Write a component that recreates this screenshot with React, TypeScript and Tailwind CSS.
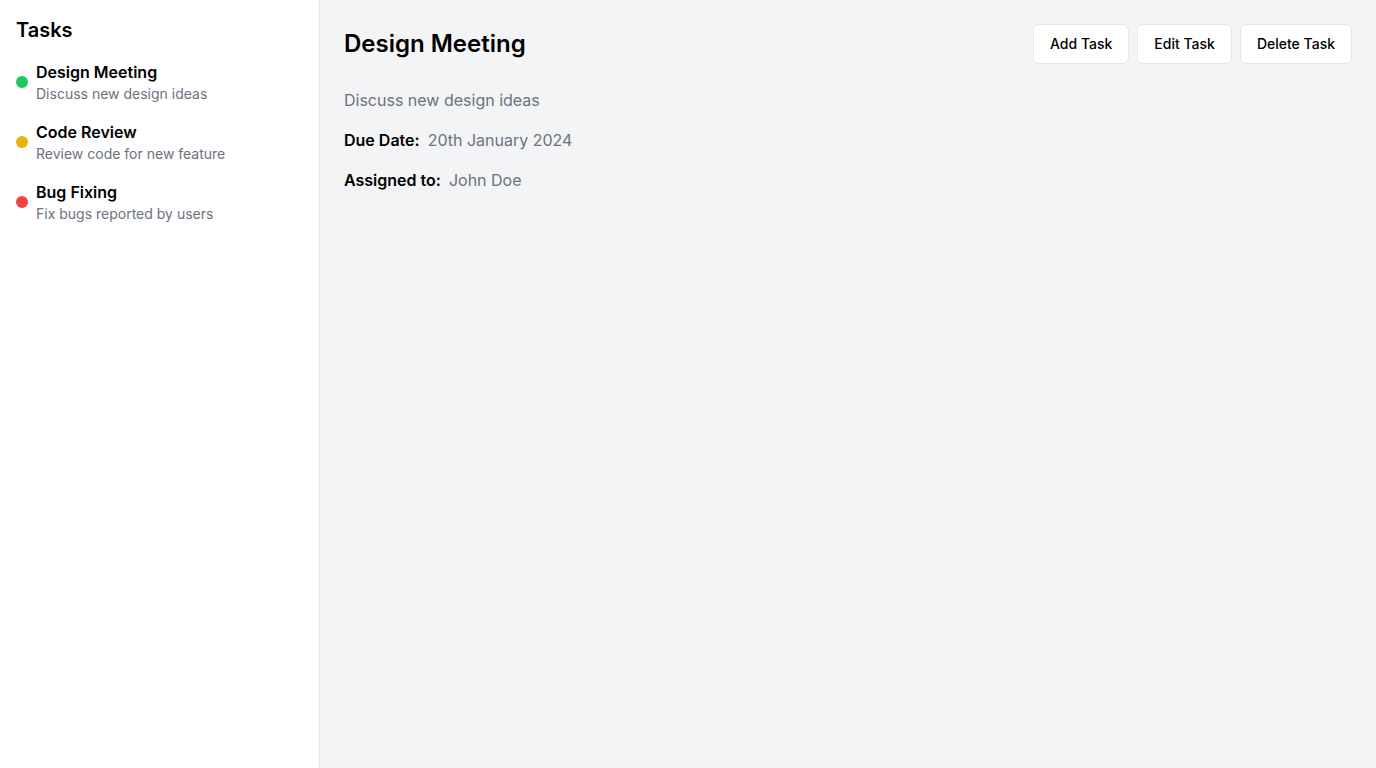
const tasks = [
  { title: "Design Meeting", desc: "Discuss new design ideas", dot: "bg-[#22c55e]" },
  { title: "Code Review", desc: "Review code for new feature", dot: "bg-[#eab308]" },
  { title: "Bug Fixing", desc: "Fix bugs reported by users", dot: "bg-[#ef4444]" },
];

export default function App() {
  return (
    <div className="flex h-screen w-full font-['Inter',sans-serif] text-black">
      <aside className="w-80 shrink-0 border-r border-[#e5e7eb] bg-white p-4">
        <h2 className="mb-4 text-xl font-semibold">Tasks</h2>
        <ul className="space-y-4">
          {tasks.map((t) => (
            <li key={t.title} className="flex items-center gap-2">
              <span className={`h-3 w-3 rounded-full ${t.dot}`} />
              <div>
                <p className="font-semibold">{t.title}</p>
                <p className="text-sm text-[#6b7280]">{t.desc}</p>
              </div>
            </li>
          ))}
        </ul>
      </aside>

      <main className="flex-1 bg-[#f3f4f6] p-6">
        <div className="flex items-center justify-between">
          <h1 className="text-2xl font-semibold">Design Meeting</h1>
          <div className="flex gap-2">
            <button className="h-10 rounded-md border border-[#e5e7eb] bg-white px-4 text-sm font-medium">
              Add Task
            </button>
            <button className="h-10 rounded-md border border-[#e5e7eb] bg-white px-4 text-sm font-medium">
              Edit Task
            </button>
            <button className="h-10 rounded-md border border-[#e5e7eb] bg-white px-4 text-sm font-medium">
              Delete Task
            </button>
          </div>
        </div>
        <div className="mt-6 space-y-4">
          <p className="text-[#6b7280]">Discuss new design ideas</p>
          <p>
            <span className="font-semibold">Due Date:</span>
            <span className="ml-2 text-[#6b7280]">20th January 2024</span>
          </p>
          <p>
            <span className="font-semibold">Assigned to:</span>
            <span className="ml-2 text-[#6b7280]">John Doe</span>
          </p>
        </div>
      </main>
    </div>
  );
}
